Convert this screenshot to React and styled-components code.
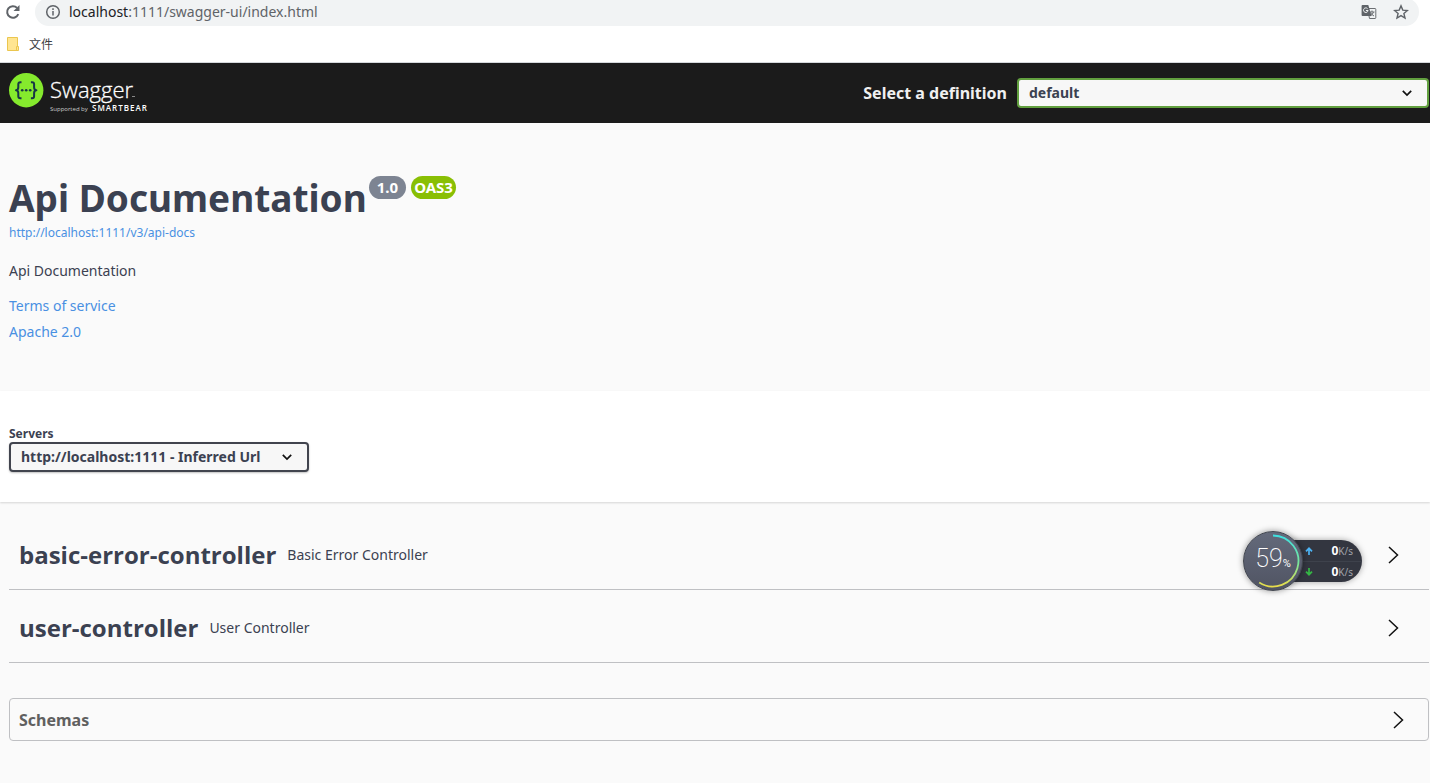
import React from "react";
import styled, { createGlobalStyle } from "styled-components";

const GlobalStyle = createGlobalStyle`
  *, *::before, *::after { box-sizing: border-box; }
  html { background: #fafafa; }
  body {
    margin: 0;
    color: #3b4151;
    font-family: "Noto Sans", "Noto Sans CJK SC", sans-serif;
    font-size: 14px;
    line-height: 20px;
  }
  h1, h2, p { margin: 0; }
  button, input, select { font-family: inherit; }
  svg { display: block; flex: none; }
`;

/* Browser chrome */
const BrowserChrome = styled.header`
  background: #fff;
  border-bottom: 1px solid #d5d8dc;
  overflow: hidden;
`;

const AddressRow = styled.div`
  display: flex;
  align-items: center;
  gap: 14px;
  height: 28px;
  margin-top: -2px;
  padding: 0 11px 0 5px;
`;

const IconButton = styled.button`
  display: flex;
  padding: 0;
  border: 0;
  background: none;
  color: #5f6368;
`;

const AddressBar = styled.form`
  display: flex;
  flex: 1;
  align-items: center;
  gap: 8px;
  height: 28px;
  padding: 0 10px;
  border-radius: 14px;
  background: #f1f3f4;
`;

const AddressText = styled.a`
  flex: 1;
  color: #5f6368;
  font-size: 14px;
  text-decoration: none;
`;

const AddressHost = styled.span`
  color: #202124;
`;

const AddressActions = styled.div`
  display: flex;
  gap: 16px;
`;

const BookmarksRow = styled.nav`
  display: flex;
  align-items: center;
  height: 36px;
  padding: 0 6px;
`;

const Bookmark = styled.a`
  display: flex;
  align-items: center;
  gap: 9px;
  color: #3c4043;
  font-family: "Noto Sans CJK SC", sans-serif;
  font-size: 12px;
  text-decoration: none;
`;

/* Swagger bar */
const TopBar = styled.div`
  display: flex;
  align-items: center;
  justify-content: space-between;
  height: 60px;
  padding: 0 1px 0 9px;
  background: #1b1b1b;
`;

const LogoLink = styled.a`
  display: flex;
  color: #fff;
`;

const DefinitionLabel = styled.label`
  display: flex;
  align-items: center;
  gap: 10px;
  color: #f0f0f0;
  font-size: 16px;
  font-weight: 700;
`;

const SelectBox = styled.span`
  position: relative;
  display: block;
  width: ${(p) => p.$width};
`;

const Select = styled.select`
  display: block;
  width: 100%;
  height: 30px;
  padding: 0 40px 2px 10px;
  border: 2px solid ${(p) => (p.$green ? "#62a03f" : "#41444e")};
  border-radius: 4px;
  background: #f7f7f7;
  box-shadow: ${(p) => (p.$green ? "none" : "0 1px 2px rgba(0, 0, 0, 0.25)")};
  color: #3b4151;
  font-size: 14px;
  font-weight: 700;
  appearance: none;
`;

const SelectArrow = styled.svg`
  position: absolute;
  top: 10px;
  right: 17px;
  pointer-events: none;
`;

/* Content */
const Info = styled.section`
  padding: 50px 9px 46px;
  background: #fafafa;
`;

const TitleRow = styled.div`
  display: flex;
  align-items: flex-start;
  gap: 2px;
`;

const Title = styled.h1`
  font-size: 37px;
  font-weight: 700;
  line-height: 50px;
`;

const Badges = styled.div`
  display: flex;
  gap: 5px;
  margin-top: 3px;
`;

const Badge = styled.span`
  height: 23px;
  padding: 0 ${(p) => (p.$green ? "3px" : "8px")};
  border-radius: 12px;
  background: ${(p) => (p.$green ? "#89bf04" : "#7d8492")};
  color: #fff;
  font-size: 15px;
  font-weight: 700;
  line-height: 23px;
`;

const TextLink = styled.a`
  display: block;
  width: fit-content;
  color: #4990e2;
  font-size: ${(p) => (p.$small ? "12px" : "14px")};
  line-height: ${(p) => (p.$small ? "20px" : "26px")};
  text-decoration: none;
`;

const Description = styled.p`
  margin: 18px 0 12px;
`;

const Servers = styled.section`
  position: relative;
  padding: 35px 9px 30px;
  background: #fff;
  box-shadow: 0 1px 2px rgba(0, 0, 0, 0.15);
`;

const ServersLabel = styled.label`
  display: block;
  font-size: 12px;
  font-weight: 700;
  line-height: 16px;
`;

const Main = styled.main`
  padding: 15px 1px 40px 9px;
`;

const TagRow = styled.button`
  display: flex;
  align-items: center;
  gap: 11px;
  width: 100%;
  height: 73px;
  padding: 4px 29px 0 10px;
  border: 0;
  border-bottom: 1px solid #bfc0c3;
  background: none;
  color: #3b4151;
  text-align: left;
`;

const TagName = styled.span`
  font-family: "Open Sans", sans-serif;
  font-size: 24px;
  font-weight: 700;
  line-height: 32px;
`;

const TagDescription = styled.span`
  flex: 1;
  font-size: 14px;
  line-height: 20px;
`;

const Schemas = styled.button`
  display: flex;
  align-items: center;
  justify-content: space-between;
  width: 100%;
  height: 43px;
  margin-top: 35px;
  padding: 0 23px 0 9px;
  border: 1px solid #bfc0c3;
  border-radius: 4px;
  background: none;
  color: #606060;
  font-size: 16px;
  font-weight: 700;
`;

/* Floating system monitor */
const Monitor = styled.aside`
  position: absolute;
  top: 531px;
  right: 68px;
  display: flex;
  align-items: center;
  width: 119px;
  height: 60px;
`;

const Gauge = styled.div`
  position: relative;
  z-index: 1;
  display: flex;
  align-items: center;
  justify-content: center;
  width: 60px;
  height: 60px;
  border: 1px solid #42464f;
  border-radius: 50%;
  background: linear-gradient(#646a7b, #505463);
  box-shadow: 0 0 6px rgba(0, 0, 0, 0.4);
  color: #fff;
`;

const GaugeArc = styled.svg`
  position: absolute;
  inset: -1px;
`;

const GaugeValue = styled.span`
  font-family: Roboto, sans-serif;
  font-size: 25px;
  font-weight: 200;
  line-height: 30px;
`;

const GaugeUnit = styled.small`
  font-size: 11px;
  font-weight: 400;
`;

const Speeds = styled.div`
  flex: 1;
  height: 42px;
  margin-left: -20px;
  padding-left: 20px;
  border-radius: 0 21px 21px 0;
  background: #333640;
  box-shadow: 0 0 6px rgba(0, 0, 0, 0.35);
`;

const Speed = styled.div`
  display: flex;
  align-items: center;
  justify-content: space-between;
  height: 21px;
  padding: 0 9px 0 2px;
  color: #a0a3aa;
  font-size: 10px;
  & + & { border-top: 1px solid #3e424c; }
`;

const SpeedValue = styled.b`
  color: #fff;
  font-size: 12px;
`;

function SwaggerLogo() {
  return (
    <svg width="142" height="44" viewBox="0 0 142 44" fill="none" role="img" aria-label="Swagger">
      <circle cx="17.2" cy="19.2" r="17.2" fill="#85ea2d" />
      <g stroke="#173647" strokeWidth="2" strokeLinejoin="round">
        <path d="M12.5 11.2h-1.2q-2 0-2 2v3.1q0 2.8-2.3 2.9q2.3.1 2.3 2.9v3.1q0 2 2 2h1.2" />
        <path d="M21.9 11.2h1.2q2 0 2 2v3.1q0 2.8 2.3 2.9q-2.3.1-2.3 2.9v3.1q0 2-2 2h-1.2" />
      </g>
      <g fill="#173647">
        <circle cx="13.2" cy="19.2" r="1.3" />
        <circle cx="17.2" cy="19.2" r="1.3" />
        <circle cx="21.2" cy="19.2" r="1.3" />
      </g>
      <g fill="#fff" fontFamily="Open Sans, sans-serif">
        <text x="41" y="27" fontSize="22" fontWeight="300" stroke="#fff" strokeWidth=".3">Swagger</text>
        <text x="41" y="40" fontSize="6" fill="#ccc">Supported by</text>
        <text x="83" y="40" fontSize="8" fontWeight="600" letterSpacing="1">SMARTBEAR</text>
      </g>
      <path d="M123 25.5h3" stroke="#888" />
    </svg>
  );
}

function Chevron() {
  return (
    <svg width="12" height="18" viewBox="0 0 12 18" fill="none" stroke="#111" strokeWidth="1.5">
      <path d="M1 1l8.5 8L1 17" />
    </svg>
  );
}

function DownArrow() {
  return (
    <SelectArrow width="10" height="10" viewBox="0 0 10 10" fill="none" stroke="#111" strokeWidth="1.7">
      <path d="M.8 2.8L5 7l4.200-4.200" />
    </SelectArrow>
  );
}

function SpeedArrow({ color, down }) {
  return (
    <svg width="8" height="8" viewBox="0 0 8 8" fill="none" stroke={color} strokeWidth="1.7">
      <path d={down ? "M4 0v7M1 3.700l3 3 3-3" : "M4 8V1M1 4.300l3-3 3 3"} />
    </svg>
  );
}

export default function App() {
  return (
    <>
      <GlobalStyle />
      <BrowserChrome>
        <AddressRow>
          <IconButton type="button" aria-label="Reload">
            <svg width="16" height="16" viewBox="0 0 16 16" fill="none">
              <path d="M13.300 10.200A5.800 5.800 0 1 1 12.100 3.900" stroke="#5f6368" strokeWidth="2" />
              <path d="M14.500 1v6h-6z" fill="#5f6368" />
            </svg>
          </IconButton>
          <AddressBar>
            <IconButton type="button" aria-label="Site information">
              <svg width="16" height="16" viewBox="0 0 16 16" fill="none" stroke="#5f6368" strokeWidth="1.5">
                <circle cx="8" cy="8" r="6.300" />
                <path d="M8 7v4.500M8 4.300v1.700" />
              </svg>
            </IconButton>
            <AddressText href="#address">
              <AddressHost>localhost</AddressHost>:1111/swagger-ui/index.html
            </AddressText>
            <AddressActions>
              <IconButton type="button" aria-label="Translate this page">
                <svg width="16" height="16" viewBox="0 0 16 16" fill="none">
                  <path d="M6.500 4.500H14a.8.8 0 0 1 .8.8v8.400a.8.8 0 0 1-.8.8H8.500z" stroke="#6b6e72" />
                  <path d="M8.500 8h5M11 6.500V8M12.500 8q-.7 2.600-3.500 4M9.500 8.500q1 2.200 3.500 3.500" stroke="#6b6e72" />
                  <path d="M1.500 1h5.800l3.200 11H1.500a.9.9 0 0 1-.9-.9V1.900a.9.9 0 0 1 .9-.9z" fill="#5f6368" />
                  <path d="M6.600 4.700A2.300 2.300 0 1 0 7.100 6.500H4.900" stroke="#f1f3f4" />
                </svg>
              </IconButton>
              <IconButton type="button" aria-label="Bookmark this page">
                <svg width="16" height="16" viewBox="0 0 16 16" fill="none" stroke="#5f6368" strokeWidth="1.400">
                  <path d="M8 1.900l1.800 4.200 4.600.4-3.500 3 1.100 4.500L8 11.600 4 14l1.100-4.500-3.500-3 4.600-.4z" />
                </svg>
              </IconButton>
            </AddressActions>
          </AddressBar>
        </AddressRow>
        <BookmarksRow>
          <Bookmark href="#files">
            <svg width="14" height="16" viewBox="0 0 14 16" fill="#ffe591" stroke="#ebc64f">
              <path d="M1.500 1.500h10v9h1v4h-11z" />
              <path d="M10.500 14v-3.500h1.500" fill="none" />
            </svg>
            文件
          </Bookmark>
        </BookmarksRow>
      </BrowserChrome>

      <TopBar>
        <LogoLink href="#swagger"><SwaggerLogo /></LogoLink>
        <DefinitionLabel>
          Select a definition
          <SelectBox $width="412px">
            <Select $green defaultValue="default">
              <option>default</option>
            </Select>
            <DownArrow />
          </SelectBox>
        </DefinitionLabel>
      </TopBar>

      <Info>
        <TitleRow>
          <Title>Api Documentation</Title>
          <Badges>
            <Badge>1.0</Badge>
            <Badge $green>OAS3</Badge>
          </Badges>
        </TitleRow>
        <TextLink $small href="#api-docs">http://localhost:1111/v3/api-docs</TextLink>
        <Description>Api Documentation</Description>
        <TextLink href="#terms">Terms of service</TextLink>
        <TextLink href="#license">Apache 2.0</TextLink>
      </Info>

      <Servers>
        <ServersLabel htmlFor="servers">Servers</ServersLabel>
        <SelectBox $width="300px">
          <Select id="servers" defaultValue="http://localhost:1111 - Inferred Url">
            <option>http://localhost:1111 - Inferred Url</option>
          </Select>
          <DownArrow />
        </SelectBox>
      </Servers>

      <Main>
        <TagRow type="button">
          <TagName>basic-error-controller</TagName>
          <TagDescription>Basic Error Controller</TagDescription>
          <Chevron />
        </TagRow>
        <TagRow type="button">
          <TagName>user-controller</TagName>
          <TagDescription>User Controller</TagDescription>
          <Chevron />
        </TagRow>
        <Schemas type="button">
          Schemas
          <Chevron />
        </Schemas>
      </Main>

      <Monitor>
        <Gauge>
          <GaugeArc width="60" height="60" viewBox="0 0 60 60" fill="none" strokeWidth="1.800">
            <defs>
              <linearGradient id="arc" x1="0" y1="0" x2="0" y2="1">
                <stop offset="0" stopColor="#3fe0e0" />
                <stop offset="0.550" stopColor="#7be59a" />
                <stop offset="1" stopColor="#e8dc4a" />
              </linearGradient>
            </defs>
            <path d="M30 4.500A25.500 25.500 0 1 1 16.200 51.500" stroke="url(#arc)" />
          </GaugeArc>
          <GaugeValue>59<GaugeUnit>%</GaugeUnit></GaugeValue>
        </Gauge>
        <Speeds>
          <Speed>
            <SpeedArrow color="#4db4f5" />
            <span><SpeedValue>0</SpeedValue>K/s</span>
          </Speed>
          <Speed>
            <SpeedArrow color="#35b845" down />
            <span><SpeedValue>0</SpeedValue>K/s</span>
          </Speed>
        </Speeds>
      </Monitor>
    </>
  );
}
